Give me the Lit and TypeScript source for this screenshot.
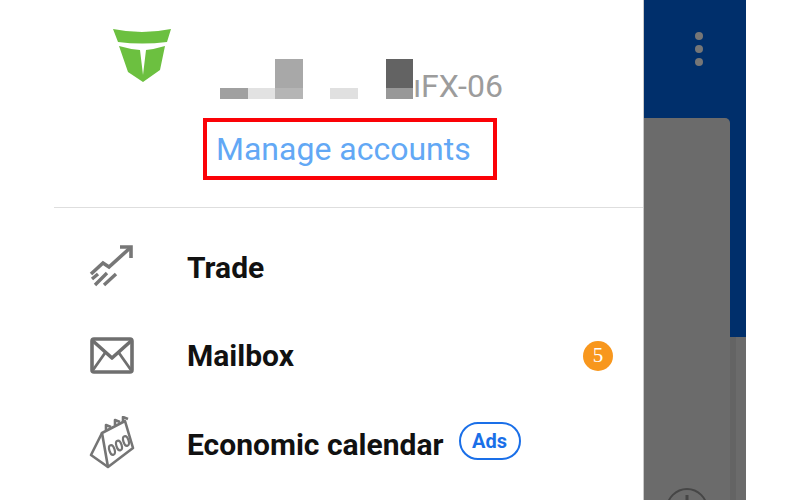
import { LitElement, html, css, svg } from 'lit'
import { customElement } from 'lit/decorators.js'

// redacted account name: one column per mosaic tile, top cell optional
const MOSAIC = [
	{ low: '#a0a0a0' },
	{ low: '#e2e2e2' },
	{ high: '#a8a8a8', low: '#b5b5b5' },
	{},
	{ low: '#e0e0e0' },
	{},
	{ high: '#636363', low: '#989898' },
]

const logo = svg`<svg width="58" height="56" viewBox="0 0 58 56" fill="#6cc040">
	<path d="M0 1Q29 7 58 1L54 14Q29 17 5 14Z" />
	<path d="M6 18Q16 21 27 22L30 47V54L15 44Z" />
	<path d="M52 18Q42 21 33 22L30 47V54L47 42Z" />
</svg>`

const tradeIcon = svg`<svg width="48" height="48" viewBox="0 0 48 48" fill="none" stroke="#777" stroke-width="3.600">
	<path d="M3 31L15 20L21 24L42 5" />
	<path d="M32 4H43V15" />
	<path d="M7 42L19 30M16 42L28 31M4 36L10 31" stroke-width="3.400" />
</svg>`

const mailIcon = svg`<svg width="48" height="40" viewBox="0 0 48 40" fill="none" stroke="#6f6f6f" stroke-width="3.600" stroke-linejoin="round">
	<rect x="4" y="3" width="40" height="33" rx="2" />
	<path d="M5 5L24 22L43 5" />
	<path d="M5 34L17 17M43 34L31 17" stroke-width="2.800" />
</svg>`

const calendarIcon = svg`<svg width="50" height="56" viewBox="0 0 50 56" fill="none" stroke="#757575" stroke-width="2.600" stroke-linejoin="round">
	<path d="M14 17L37 5L45 32L20 51Z" />
	<path d="M14 17L3 39L20 51" />
	<path d="M18 14V9L23 11M27 9V4L32 6M35 6V1L40 3" />
	<ellipse cx="24" cy="34" rx="2.600" ry="5" transform="rotate(-18 24 34)" stroke-width="2.200" />
	<ellipse cx="31" cy="29.500" rx="2.600" ry="5" transform="rotate(-18 31 29.500)" stroke-width="2.200" />
	<ellipse cx="38" cy="25" rx="2.600" ry="5" transform="rotate(-18 38 25)" stroke-width="2.200" />
</svg>`

@customElement('app-root')
export class AppRoot extends LitElement {
	static styles = css`
		:host {
			display: block;
			width: 800px;
			height: 500px;
			background: #fff;
			overflow: hidden;
			font-family: Roboto, 'Liberation Sans', sans-serif;
		}

		.screen {
			display: flex;
			height: 500px;
		}

		/* Drawer */
		.drawer {
			width: 643px;
			flex: none;
			background: #fff;
		}

		.account {
			display: flex;
			gap: 32px;
			height: 207px;
			padding-left: 113px;
			box-sizing: border-box;
		}

		.logo {
			padding-top: 28px;
		}

		.identity {
			padding-top: 59px;
		}

		.name {
			display: flex;
			align-items: flex-end;
			height: 40px;
			padding-left: 17px;
		}

		.tile {
			width: 27.6px;
			flex: none;
		}

		.tile .high {
			height: 29px;
		}

		.tile .low {
			height: 11px;
		}

		.suffix {
			font-size: 32px;
			line-height: 32px;
			color: #9c9c9c;
			white-space: nowrap;
			align-self: flex-end;
			margin-bottom: -3px;
		}

		.manage {
			display: flex;
			align-items: center;
			box-sizing: border-box;
			width: 294px;
			height: 62px;
			margin-top: 19px;
			padding-left: 9px;
			border: 4px solid #fb0207;
			font-size: 32px;
			color: #62a8f5;
			white-space: nowrap;
		}

		.divider {
			height: 1px;
			margin-left: 54px;
			background: #dedede;
		}

		.menu {
			padding-top: 15px;
		}

		.item {
			display: flex;
			align-items: center;
			height: 88.5px;
			padding: 0 30px 0 88px;
		}

		.icon {
			display: flex;
			width: 99px;
			flex: none;
		}

		.label {
			font-size: 30px;
			font-weight: 700;
			color: #111;
			white-space: nowrap;
		}

		.badge {
			display: flex;
			align-items: center;
			justify-content: center;
			width: 30px;
			height: 30px;
			margin-left: auto;
			border-radius: 50%;
			background: #f8971d;
			color: #fff;
			font-family: 'Liberation Serif', serif;
			font-size: 21px;
		}

		.ads {
			display: flex;
			align-items: center;
			justify-content: center;
			box-sizing: border-box;
			width: 62px;
			height: 38px;
			margin: -6px 0 0 15px;
			border: 2px solid #1a6fe8;
			border-radius: 19px;
			color: #1a6fe8;
			font-size: 20px;
			font-weight: 700;
		}

		/* Content behind the scrim */
		.behind {
			display: flex;
			flex-direction: column;
			width: 103px;
			flex: none;
			background: #002f6b;
			border-left: 1px solid #c9c9c9;
			box-sizing: border-box;
		}

		.topbar {
			display: flex;
			flex-direction: column;
			align-items: center;
			gap: 5px;
			height: 118px;
			padding: 32px 0 0 8px;
			box-sizing: border-box;
		}

		.dot {
			width: 8px;
			height: 8px;
			border-radius: 50%;
			background: #767676;
		}

		.body {
			display: flex;
			flex: 1;
			min-height: 0;
		}

		.card {
			display: flex;
			justify-content: center;
			width: 86px;
			flex: none;
			padding-top: 369px;
			box-sizing: border-box;
			background: #6b6b6b;
			border-top-right-radius: 5px;
			overflow: hidden;
		}

		.edge {
			flex: 1;
			display: flex;
			flex-direction: column;
		}

		.edge .navy {
			height: 219px;
		}

		.edge .shade {
			flex: 1;
			background: #6b6b6b;
			border-left: 6px solid #646464;
		}
	`

	private renderTile(tile: { high?: string; low?: string }) {
		return html`<div class="tile">
			${tile.high ? html`<div class="high" style="background:${tile.high}"></div>` : ''}
			${tile.low ? html`<div class="low" style="background:${tile.low}"></div>` : ''}
		</div>`
	}

	render() {
		return html`
			<div class="screen">
				<nav class="drawer">
					<div class="account">
						<div class="logo">${logo}</div>
						<div class="identity">
							<div class="name">
								${MOSAIC.map((tile) => this.renderTile(tile))}
								<span class="suffix">ıFX-06</span>
							</div>
							<div class="manage">Manage accounts</div>
						</div>
					</div>
					<div class="divider"></div>
					<div class="menu">
						<div class="item">
							<span class="icon">${tradeIcon}</span>
							<span class="label">Trade</span>
						</div>
						<div class="item">
							<span class="icon">${mailIcon}</span>
							<span class="label">Mailbox</span>
							<span class="badge">5</span>
						</div>
						<div class="item">
							<span class="icon">${calendarIcon}</span>
							<span class="label">Economic calendar</span>
							<span class="ads">Ads</span>
						</div>
					</div>
				</nav>
				<aside class="behind">
					<div class="topbar">
						<span class="dot"></span>
						<span class="dot"></span>
						<span class="dot"></span>
					</div>
					<div class="body">
						<div class="card">
							<svg width="44" height="44" viewBox="0 0 44 44" fill="none" stroke="#464646" stroke-width="2">
								<circle cx="22" cy="22" r="20" />
								<path d="M22 8V14" stroke-width="3" />
							</svg>
						</div>
						<div class="edge">
							<div class="navy"></div>
							<div class="shade"></div>
						</div>
					</div>
				</aside>
			</div>
		`
	}
}
